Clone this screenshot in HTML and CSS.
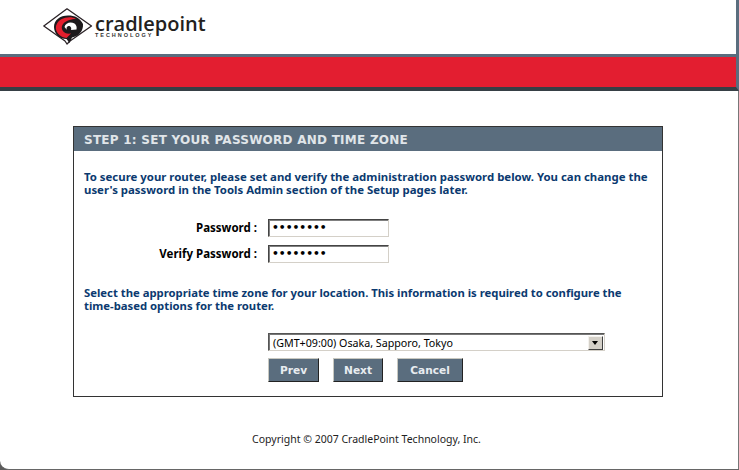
FILE: index.html
```html
<!DOCTYPE html>
<html lang="en">
<head>
<meta charset="utf-8">
<title>CradlePoint Setup Wizard</title>
<link rel="stylesheet" href="styles.css">
</head>
<body>
<div class="page">
  <header class="top">
    <div class="logo">
      <svg class="mark" width="50" height="37" viewBox="43 8 50 37">
        <path d="M67 8.8 L91.5 26 L70 41 L67 44 L65 41 L43.8 26 Z" fill="#fff" stroke="#2a2226" stroke-width="1.3" stroke-linejoin="round"/>
        <path d="M68 15.5 C75 15.5 80 18 83 24 C83.5 31 79 36 72 37.5 L69.5 43 L66.5 39 C59 39 54 33 54 27 C54 20 60 15.5 68 15.5 Z" fill="#1d1a1c"/>
        <path d="M76 18.6 C70 15.5 58.5 17 56 26 C54.8 32 60 37.5 66.5 38 L71 33.5 C63.5 34.5 61 29.5 62 26 C64 21 70 19.8 76 18.6 Z" fill="#e31e2d"/>
        <path d="M64.5 27 C65.5 22.5 71 21.2 74.5 23.6 C76.5 25 77 27.5 76.5 29.5 L71 30 C72 27.5 70 25.5 68 26.2 C66.5 26.7 66.2 28.5 67 30 Z" fill="#fff"/>
      </svg>
      <div class="brand">
        <span class="brand-name">cradlepoint</span>
        <span class="brand-sub">TECHNOLOGY</span>
      </div>
    </div>
  </header>
  <div class="band"></div>
  <main class="content">
    <section class="box">
      <h1 class="box-title">STEP 1: SET YOUR PASSWORD AND TIME ZONE</h1>
      <div class="box-body">
        <p class="intro">To secure your router, please set and verify the administration password below. You can change the user's password in the Tools Admin section of the Setup pages later.</p>
        <div class="fields">
          <label class="field"><span class="field-label">Password :</span><input class="field-input" type="password" value="password"></label>
          <label class="field"><span class="field-label">Verify Password :</span><input class="field-input" type="password" value="password"></label>
        </div>
        <p class="intro tz-text">Select the appropriate time zone for your location. This information is required to configure the <span class="nowrap">time-based</span> options for the router.</p>
        <div class="select-row">
          <div class="select">
            <span class="select-value">(GMT+09:00) Osaka, Sapporo, Tokyo</span>
            <span class="select-arrow"></span>
          </div>
        </div>
        <div class="actions">
          <button class="btn btn-prev" type="button">Prev</button>
          <button class="btn btn-next" type="button">Next</button>
          <button class="btn btn-cancel" type="button">Cancel</button>
        </div>
      </div>
    </section>
    <footer class="copy">Copyright © 2007 CradlePoint Technology, Inc.</footer>
  </main>
</div>
</body>
</html>
```
FILE: styles.css
```css
html, body { margin: 0; padding: 0; background: #5c5c5c; }
body { width: 739px; height: 470px; overflow: hidden; font-family: "DejaVu Sans", sans-serif; }
.page { width: 739px; height: 470px; box-sizing: border-box; display: flex; flex-direction: column; background: #fff; border-bottom: 1px solid #666; border-bottom-left-radius: 9px; overflow: hidden; }
.top { height: 54px; box-sizing: border-box; padding: 8px 0 0 43px; border-right: 3px solid #5a6d7e; }
.logo { display: flex; align-items: flex-start; }
.mark { display: block; flex: none; }
.brand { display: flex; flex-direction: column; margin: 7px 0 0 2px; }
.brand-name { font-family: "Open Sans", sans-serif; font-size: 20px; line-height: 18px; font-weight: 600; color: #231f20; }
.brand-sub { font-family: "Liberation Sans", sans-serif; font-size: 5.5px; line-height: 5px; letter-spacing: 1.95px; font-weight: 700; color: #333; }
.band { height: 37px; box-sizing: border-box; background: #e31e30; border-top: 3px solid #5a6d7e; border-bottom: 4px solid #363f45; border-right: 3px solid #5a6d7e; }
.content { flex: 1; display: flex; flex-direction: column; align-items: flex-start; padding: 35px 0 0 73px; border-right: 1px solid #777; }
.box { width: 590px; height: 271px; box-sizing: border-box; border: 1px solid #333; }
.box-title { margin: 0; height: 24px; background: #5a6d7e; color: #e0e5e9; font: bold 12px/26px "DejaVu Sans", sans-serif; letter-spacing: .25px; padding-left: 10px; }
.box-body { padding: 19px 10px 0; }
.intro { margin: 0; font: bold 11.4px/13px "Noto Sans", sans-serif; color: #0b3a70; }
.nowrap { white-space: nowrap; }
.fields { margin-top: 22px; display: flex; flex-direction: column; gap: 7px; }
.field { display: flex; align-items: center; }
.field-label { width: 173px; padding-top: 1px; text-align: right; font: bold 11.5px/18px "Noto Sans", sans-serif; color: #000; }
.field-input { width: 121px; height: 18px; box-sizing: border-box; margin: 0 0 0 11px; padding: 0 3px; border: 1px solid; border-color: #444 #d4d0c8 #d4d0c8 #444; box-shadow: inset 1px 1px 0 #808080; font: bold 10.7px "DejaVu Sans", sans-serif; background: #fff; color: #000; outline: none; }
.tz-text { margin-top: 23px; font-size: 11.3px; }
.select-row { margin-top: 21px; padding-left: 184px; }
.select { width: 337px; height: 18px; box-sizing: border-box; display: flex; align-items: center; justify-content: space-between; border: 1px solid; border-color: #555 #d4d0c8 #d4d0c8 #555; box-shadow: inset 1px 1px 0 #777; font: 10.7px/16px "Noto Sans", sans-serif; color: #000; padding: 1px 1px 0 4px; background: #fff; }
.select-arrow { width: 15px; height: 14px; box-sizing: border-box; background: #d4d0c8; border: 1px solid; border-color: #f4f2ee #404040 #404040 #f4f2ee; position: relative; }
.select-arrow::after { content: ""; position: absolute; left: 3px; top: 4px; border: 3.5px solid transparent; border-top: 4px solid #000; border-bottom: 0; }
.actions { margin-top: 7px; padding-left: 184px; display: flex; gap: 14px; }
.btn { height: 24px; padding: 0; border: 1px solid; border-color: #c8c8c0 #222 #222 #c8c8c0; background: #5a6d7e; color: #e8ecf0; font: bold 10.6px "DejaVu Sans", sans-serif; }
.btn-prev { width: 51px; }
.btn-next { width: 50px; }
.btn-cancel { width: 66px; }
.copy { align-self: stretch; box-sizing: border-box; margin: 35px 0 0 -73px; padding-right: 5px; text-align: center; font: 10.5px/14px "Noto Sans", sans-serif; color: #222; }
```
